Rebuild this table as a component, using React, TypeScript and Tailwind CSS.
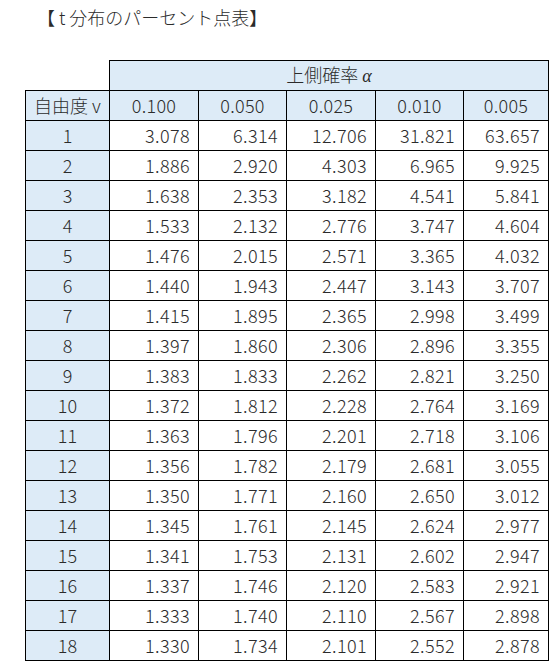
const alphas = ['0.100', '0.050', '0.025', '0.010', '0.005']

const rows: [number, string[]][] = [
  [1, ['3.078', '6.314', '12.706', '31.821', '63.657']],
  [2, ['1.886', '2.920', '4.303', '6.965', '9.925']],
  [3, ['1.638', '2.353', '3.182', '4.541', '5.841']],
  [4, ['1.533', '2.132', '2.776', '3.747', '4.604']],
  [5, ['1.476', '2.015', '2.571', '3.365', '4.032']],
  [6, ['1.440', '1.943', '2.447', '3.143', '3.707']],
  [7, ['1.415', '1.895', '2.365', '2.998', '3.499']],
  [8, ['1.397', '1.860', '2.306', '2.896', '3.355']],
  [9, ['1.383', '1.833', '2.262', '2.821', '3.250']],
  [10, ['1.372', '1.812', '2.228', '2.764', '3.169']],
  [11, ['1.363', '1.796', '2.201', '2.718', '3.106']],
  [12, ['1.356', '1.782', '2.179', '2.681', '3.055']],
  [13, ['1.350', '1.771', '2.160', '2.650', '3.012']],
  [14, ['1.345', '1.761', '2.145', '2.624', '2.977']],
  [15, ['1.341', '1.753', '2.131', '2.602', '2.947']],
  [16, ['1.337', '1.746', '2.120', '2.583', '2.921']],
  [17, ['1.333', '1.740', '2.110', '2.567', '2.898']],
  [18, ['1.330', '1.734', '2.101', '2.552', '2.878']],
]

export default function App() {
  return (
    <div
      className="w-[550px] h-[661px] bg-white text-[#2b2b2b] font-light overflow-hidden"
      style={{ fontFamily: '"Noto Sans CJK JP", "Noto Sans", sans-serif' }}
    >
      {/* Title */}
      <div className="h-[60px] pl-[37px] pt-[4px] text-[18px] leading-[26px]">
        【 t 分布のパーセント点表】
      </div>

      <table className="ml-[25px] border-collapse table-fixed w-[523px] text-[18px]">
        <colgroup>
          <col className="w-[84px]" />
          <col className="w-[89px]" />
          <col className="w-[88px]" />
          <col className="w-[89px]" />
          <col className="w-[88px]" />
          <col className="w-[85px]" />
        </colgroup>
        <tbody>
          <tr className="h-[30px]">
            <td className="p-0" />
            <td colSpan={5} className="border border-black bg-[#ddebf7] text-center p-0">
              上側確率 <span className="italic" style={{ fontFamily: '"Liberation Serif", serif' }}>α</span>
            </td>
          </tr>
          <tr className="h-[30px]">
            <td className="border border-black bg-[#ddebf7] text-center p-0">自由度 v</td>
            {alphas.map((a) => (
              <td key={a} className="border border-black bg-[#ddebf7] text-center p-0 tracking-[0.3px]">
                {a}
              </td>
            ))}
          </tr>
          {rows.map(([df, vals]) => (
            <tr key={df} className="h-[30px]">
              <td className="border border-black bg-[#ddebf7] text-center p-0">{df}</td>
              {vals.map((v, i) => (
                <td key={i} className="border border-black text-right pr-[8px] py-0 tracking-[0.4px]">
                  {v}
                </td>
              ))}
            </tr>
          ))}
        </tbody>
      </table>
    </div>
  )
}
